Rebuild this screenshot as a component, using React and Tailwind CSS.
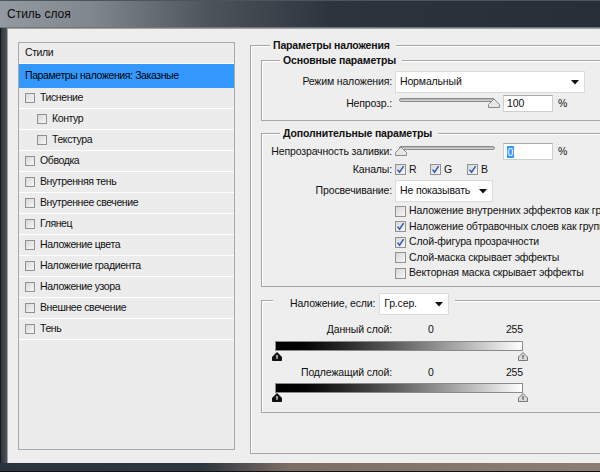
import React from "react";

const Arrow = () => (
  <svg width="8" height="5" viewBox="0 0 8 5" className="shrink-0">
    <path d="M0 0 H8 L4 4.5 Z" fill="#111" />
  </svg>
);

const Check = () => (
  <svg width="9" height="9" viewBox="0 0 9 9">
    <path d="M1.6 4.6 L3.6 7.2 L7.6 1.2" fill="none" stroke="#2c56b8" strokeWidth="1.5" />
  </svg>
);

const Cb = ({ checked, small }) => (
  <span
    className={
      "shrink-0 inline-flex items-center justify-center border border-[#8f9193] bg-gradient-to-br from-[#d8d8d8] to-[#f7f7f7] " +
      (small ? "w-[10px] h-[10px]" : "w-[11px] h-[11px]")
    }
  >
    {checked && <Check />}
  </span>
);

const SliderThumb = () => (
  <svg width="12" height="10" viewBox="0 0 12 10">
    <path d="M0.5 9.5 V6.5 L6 1 L11.5 6.5 V9.5 Z" fill="#e6e6e6" stroke="#8a8a8a" />
  </svg>
);

const Slider = ({ pos }) => (
  <div className="relative ml-[3px] w-[105px] h-[17px] shrink-0">
    <div className="ml-[4px] mt-[3px] w-[96px] h-[4px] rounded-full border border-[#8c8c8c] bg-gradient-to-b from-[#a9a9a9] to-[#dedede]" />
    <div className="absolute top-[3px]" style={{ left: pos }}>
      <SliderThumb />
    </div>
  </div>
);

const BlackThumb = () => (
  <svg width="10" height="9" viewBox="0 0 10 9">
    <path d="M0.5 8.5 V5 L5 0.5 L9.5 5 V8.5 Z" fill="#111" stroke="#111" />
    <path d="M5 3 V6.8" stroke="#fff" strokeWidth="1.2" />
  </svg>
);

const WhiteThumb = () => (
  <svg width="10" height="9" viewBox="0 0 10 9">
    <path d="M0.5 8.5 V5 L5 0.5 L9.5 5 V8.5 Z" fill="#dadada" stroke="#777" />
    <path d="M5 3 V6.8" stroke="#555" strokeWidth="1.2" />
  </svg>
);

const boxCls =
  "border-l border-t border-b border-[#a6a6a6] shadow-[inset_1px_1px_0_#ffffff]";

const GroupHeader = ({ children, ml = "ml-[18px]" }) => (
  <div className={"-mt-[8px] flex h-[14px] " + ml}>
    <span className="bg-[#eeeeee] pl-[3px] pr-[6px] font-bold leading-[14px] whitespace-nowrap">
      {children}
    </span>
  </div>
);

const Label = ({ children }) => (
  <span className="w-[130px] shrink-0 text-right whitespace-nowrap">{children}</span>
);

const Select = ({ w, text }) => (
  <div
    className={
      "ml-[3px] h-[22px] bg-white border border-[#dadada] flex items-center justify-between pl-[4px] pr-[5px] shrink-0 " +
      w
    }
  >
    <span className="whitespace-nowrap">{text}</span>
    <Arrow />
  </div>
);

const GradientBar = () => (
  <div className="ml-[13px] w-[248px] h-[10px] border border-[#8a8a8a] bg-gradient-to-r from-black to-white" />
);

const Thumbs = () => (
  <div className="ml-[10px] w-[256px] h-[10px] flex justify-between items-start">
    <BlackThumb />
    <WhiteThumb />
  </div>
);

const items = [
  ["Тиснение", 0],
  ["Контур", 1],
  ["Текстура", 1],
  ["Обводка", 0],
  ["Внутренняя тень", 0],
  ["Внутреннее свечение", 0],
  ["Глянец", 0],
  ["Наложение цвета", 0],
  ["Наложение градиента", 0],
  ["Наложение узора", 0],
  ["Внешнее свечение", 0],
  ["Тень", 0],
];

const extraChecks = [
  ["Наложение внутренних эффектов как группы", false, "h-[16px]"],
  ["Наложение обтравочных слоев как группы", true, "h-[15px]"],
  ["Слой-фигура прозрачности", true, "h-[16px]"],
  ["Слой-маска скрывает эффекты", false, "h-[15px]"],
  ["Векторная маска скрывает эффекты", false, "h-[16px]"],
];

export default function App() {
  return (
    <div className="w-[600px] h-[472px] overflow-hidden flex flex-col bg-[#2a323a] font-['Liberation_Sans',Arial,sans-serif] text-[11px] text-black">
      {/* title bar */}
      <div className="h-[28px] shrink-0 flex items-center pl-[7px] pb-[1px] border-t border-[#4d555c] border-b border-b-[#6f767c] bg-[linear-gradient(to_right,#9399a0_0%,#80878d_15%,#4c535a_35%,#2c343d_55%,#262e37_100%)]">
        <span className="text-[12px] text-[#0a0a0a]">Стиль слоя</span>
      </div>

      <div className="flex-1 flex min-h-0">
        <div className="w-[7px] shrink-0 border-l border-[#14191e] bg-gradient-to-r from-[#2e353c] to-[#4d545b]" />
        <div className="flex-1 min-w-0 flex items-start bg-[#eeeeee] border-l border-t border-[#a2a2a2] overflow-hidden">
          {/* left panel */}
          <div className="ml-[10px] mt-[13px] w-[217px] h-[408px] shrink-0 border border-[#a9a9a9] bg-[#ececec] flex flex-col text-[10.5px] tracking-[-0.4px] text-[#111]">
            <div className="h-[21px] border-b border-white flex items-center pl-[6px]">Стили</div>
            <div className="h-[24px] bg-[#3399ff] flex items-center pl-[6px] whitespace-nowrap text-black">
              Параметры наложения: Заказные
            </div>
            {items.map(([t, lvl]) => (
              <div
                key={t}
                className={
                  "h-[21px] border-b border-white flex items-center gap-[5px] " +
                  (lvl ? "pl-[18px]" : "pl-[6px]")
                }
              >
                <Cb small />
                <span className="whitespace-nowrap">{t}</span>
              </div>
            ))}
          </div>

          {/* right column */}
          <div className="ml-[15px] mt-[16px] w-[420px] shrink-0 text-[10.5px] tracking-[-0.15px] text-[#111]">
            <div className={boxCls + " h-[409px]"}>
              <GroupHeader ml="ml-[19px]">Параметры наложения</GroupHeader>

              {/* group 1 */}
              <div className={boxCls + " ml-[10px] mt-[8px] pb-[8px]"}>
                <GroupHeader>Основные параметры</GroupHeader>
                <div className="mt-[4px] flex items-center">
                  <Label>Режим наложения:</Label>
                  <Select w="w-[190px]" text="Нормальный" />
                </div>
                <div className="mt-[2px] flex items-center h-[17px]">
                  <Label>Непрозр.:</Label>
                  <Slider pos={93} />
                  <div className="ml-[3px] w-[50px] h-[17px] bg-white border border-[#cfcfcf] border-t-[#a9a9a9] flex items-center pl-[3px] shrink-0">
                    100
                  </div>
                  <span className="ml-[5px]">%</span>
                </div>
              </div>

              {/* group 2 */}
              <div className={boxCls + " ml-[10px] mt-[12px] pb-[5px]"}>
                <GroupHeader>Дополнительные параметры</GroupHeader>
                <div className="mt-[3px] flex items-center h-[17px]">
                  <Label>Непрозрачность заливки:</Label>
                  <Slider pos={0} />
                  <div className="ml-[3px] w-[50px] h-[17px] bg-white border border-[#cfcfcf] border-t-[#a9a9a9] flex items-center pl-[3px] shrink-0">
                    <span className="bg-[#3399ff] text-white leading-[12px] px-[0.5px]">0</span>
                  </div>
                  <span className="ml-[5px]">%</span>
                </div>
                <div className="mt-[2px] flex items-center h-[15px]">
                  <Label>Каналы:</Label>
                  <div className="ml-[3px] w-[35px] flex items-center gap-[3px]">
                    <Cb checked />
                    <span>R</span>
                  </div>
                  <div className="w-[37px] flex items-center gap-[3px]">
                    <Cb checked />
                    <span>G</span>
                  </div>
                  <div className="flex items-center gap-[3px]">
                    <Cb checked />
                    <span>B</span>
                  </div>
                </div>
                <div className="mt-[3px] flex items-center">
                  <Label>Просвечивание:</Label>
                  <Select w="w-[98px]" text="Не показывать" />
                </div>
                <div className="mt-[1px]">
                  {extraChecks.map(([t, c, h]) => (
                    <div key={t} className={"pl-[133px] flex items-center gap-[3px] " + h}>
                      <Cb checked={c} />
                      <span className="whitespace-nowrap">{t}</span>
                    </div>
                  ))}
                </div>
              </div>

              {/* group 3 */}
              <div className={boxCls + " ml-[10px] mt-[13px] pb-[9px]"}>
                <div className="-mt-[8px] ml-[11px] flex">
                  <div className="bg-[#eeeeee] pl-[17px] pr-[6px] h-[22px] flex items-center">
                    <span className="whitespace-nowrap">Наложение, если:</span>
                    <div className="ml-[4px] w-[70px] h-[22px] bg-white border border-[#dadada] flex items-center justify-between pl-[4px] pr-[5px]">
                      <span>Гр.сер.</span>
                      <Arrow />
                    </div>
                  </div>
                </div>
                <div className="mt-[8px] h-[14px] flex items-center">
                  <Label>Данный слой:</Label>
                  <div className="ml-[36px] w-[95px] flex justify-between">
                    <span>0</span>
                    <span>255</span>
                  </div>
                </div>
                <div className="mt-[4px]">
                  <GradientBar />
                </div>
                <div className="mt-[1px]">
                  <Thumbs />
                </div>
                <div className="mt-[4px] h-[14px] flex items-center">
                  <Label>Подлежащий слой:</Label>
                  <div className="ml-[36px] w-[95px] flex justify-between">
                    <span>0</span>
                    <span>255</span>
                  </div>
                </div>
                <div className="mt-[3px]">
                  <GradientBar />
                </div>
                <div>
                  <Thumbs />
                </div>
              </div>
            </div>
          </div>
        </div>
      </div>

      {/* bottom frame */}
      <div className="h-[9px] shrink-0 border-b border-[#111] bg-[linear-gradient(to_right,#2b333c_0%,#2e363f_34%,#7c6d66_48%,#8c7e77_100%)]" />
    </div>
  );
}
